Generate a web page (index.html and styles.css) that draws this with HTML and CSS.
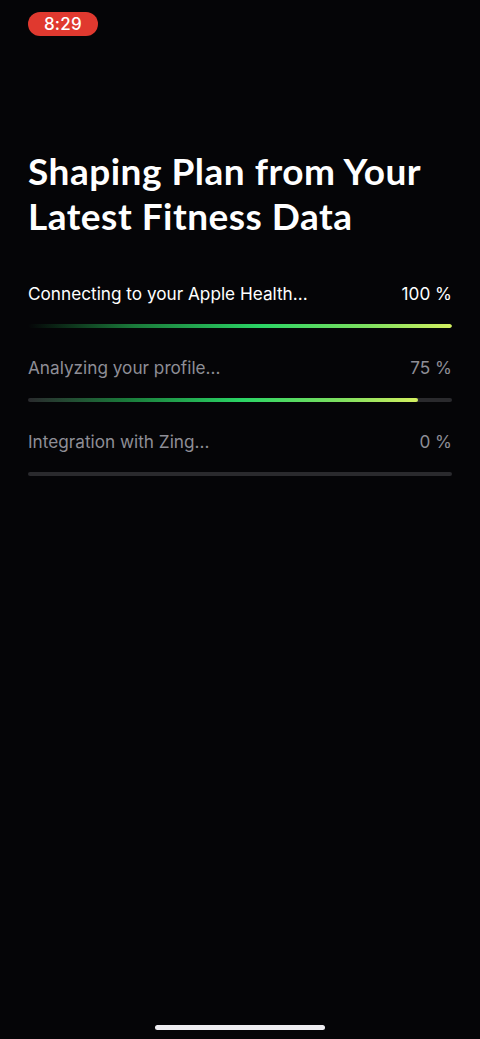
FILE: index.html
```html
<!DOCTYPE html>
<html>
<head>
<meta charset="utf-8">
<link rel="stylesheet" href="styles.css">
</head>
<body>
<div class="screen">
  <div class="status"><span class="time">8:29</span></div>
  <h1 class="title">Shaping Plan from Your Latest Fitness Data</h1>
  <div class="steps">
    <div class="step active">
      <div class="row"><span>Connecting to your Apple Health...</span><span>100 %</span></div>
      <div class="track"><div class="fill" style="width:100%"></div></div>
    </div>
    <div class="step">
      <div class="row"><span>Analyzing your profile...</span><span>75 %</span></div>
      <div class="track"><div class="fill" style="width:92%"></div></div>
    </div>
    <div class="step">
      <div class="row"><span>Integration with Zing...</span><span>0 %</span></div>
      <div class="track"><div class="fill" style="width:0%"></div></div>
    </div>
  </div>
  <div class="spacer"></div>
  <div class="home"></div>
</div>
</body>
</html>
```
FILE: styles.css
```css
html, body {
  margin: 0;
  padding: 0;
  background: #050507;
}
.screen {
  width: 480px;
  height: 1039px;
  display: flex;
  flex-direction: column;
  box-sizing: border-box;
  padding: 12px 28px 0;
  font-family: Inter, "Liberation Sans", sans-serif;
  color: #fff;
}
.status {
  height: 24px;
  display: flex;
}
.time {
  background: #e0392f;
  color: #fff;
  border-radius: 12px;
  width: 70px;
  height: 24px;
  display: flex;
  align-items: center;
  justify-content: center;
  font-size: 17px;
  font-weight: 500;
  letter-spacing: 0.3px;
}
.title {
  margin: 112px 0 0;
  font-family: Lato, "Noto Sans", sans-serif;
  font-weight: 700;
  font-size: 37px;
  line-height: 45px;
  letter-spacing: 0.5px;
  width: 424px;
}
.steps {
  margin-top: 45px;
  display: flex;
  flex-direction: column;
  gap: 29px;
}
.step {
  display: flex;
  flex-direction: column;
  gap: 19px;
}
.row {
  display: flex;
  justify-content: space-between;
  font-size: 17.2px;
  line-height: 22px;
  color: #8e8e96;
}
.step.active .row {
  color: #fff;
}
.track {
  height: 4px;
  border-radius: 2px;
  background: #2a2a2d;
  overflow: hidden;
}
.step.active .track {
  background: transparent;
}
.fill {
  height: 100%;
  border-radius: 2px;
  background: linear-gradient(90deg, rgba(20,60,30,0) 0%, #1a7a3a 25%, #2bd565 55%, #7ee060 80%, #d4f060 100%);
}
.spacer {
  flex: 1;
}
.home {
  align-self: center;
  width: 170px;
  height: 5px;
  border-radius: 3px;
  background: #efeef2;
  margin-bottom: 9px;
}
```
